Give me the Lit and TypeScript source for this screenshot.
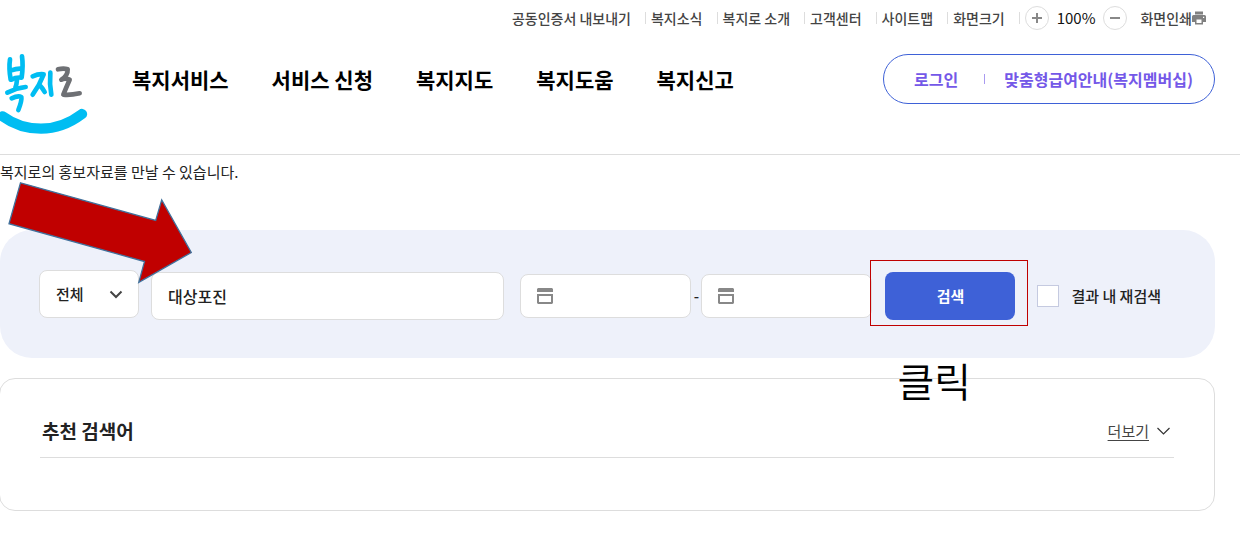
import { LitElement, html, css, svg } from "lit";
import { customElement, state } from "lit/decorators.js";

const UTIL_LINKS = ["공동인증서 내보내기", "복지소식", "복지로 소개", "고객센터", "사이트맵", "화면크기"];
const MENU = ["복지서비스", "서비스 신청", "복지지도", "복지도움", "복지신고"];

const logo = html`<svg class="logo" viewBox="0 30 264 261" role="img" aria-label="복지로">
  <g fill="none" stroke="#00bdf2" stroke-width="14" stroke-linecap="round" stroke-linejoin="round">
    <path d="M30 58 Q26 84 32 119 M66 49 Q70 76 65 112 M34 91 Q50 85 64 86 M34 119 Q48 111 64 113"/>
    <path d="M51 119 Q50 134 46 143 M22 158 Q50 144 77 141"/>
    <path d="M35 175 Q54 166 64 171 Q66 182 55 210"/>
    <path d="M98 109 Q116 101 131 103 Q118 137 98 164 M117 133 Q127 143 134 156"/>
    <path d="M151 98 Q148 130 154 164"/>
  </g>
  <path fill="none" stroke="#6e7074" stroke-width="14" stroke-linecap="round" stroke-linejoin="round"
    d="M174 88 Q191 84 203 88 Q204 106 184 119 Q194 113 209 119 Q199 141 190 164 Q211 166 239 160"/>
  <path fill="none" stroke="#00bdf2" stroke-width="31" stroke-linecap="round" d="M8 229 Q58 266 123 266 Q188 266 246 222"/>
</svg>`;

const calendar = html`<svg class="cal" viewBox="0 0 16 16" aria-hidden="true">
  <path fill="#888" d="M1 0h14l1 1v3H0V1zM0 6h16v9l-1 1H1l-1-1zM2 8v6h12V8z" fill-rule="evenodd"/>
</svg>`;

const sign = (plus: boolean) => html`<svg class="sign" viewBox="0 0 10 10" aria-hidden="true">
  <path fill="none" stroke="#888" stroke-width="2" d="M0 5H10"/>
  ${plus ? svg`<path fill="none" stroke="#888" stroke-width="2" d="M5 0V10"/>` : ""}
</svg>`;

@customElement("app-root")
export class AppRoot extends LitElement {
  @state() private zoom = 100;

  static styles = css`
    :host {
      display: block;
      background: #fff;
      color: #222;
      font: 15px/22px "Noto Sans CJK KR", "Noto Sans", sans-serif;
    }
    * { box-sizing: border-box; }
    a { color: inherit; text-decoration: none; }
    button, input, select { font: inherit; color: inherit; margin: 0; }
    ul { list-style: none; margin: 0; padding: 0; }

    .header { border-bottom: 1px solid #ddd; height: 155px; }
    .util {
      display: flex;
      justify-content: flex-end;
      align-items: center;
      height: 36px;
      padding-right: 34px;
      font-size: 14px;
      font-weight: 500;
      color: #444;
      white-space: nowrap;
    }
    .links { display: flex; }
    .links li { display: flex; align-items: center; }
    .links li::after { content: ""; width: 1px; height: 12px; margin: 0 5px 0 14px; background: #ddd; }
    .sizer { display: flex; align-items: center; gap: 8px; margin-right: 13px; }
    .round {
      display: grid;
      place-items: center;
      width: 24px;
      height: 24px;
      padding: 0;
      border: 1px solid #ddd;
      border-radius: 50%;
      background: #fff;
    }
    .sign { width: 10px; height: 10px; }
    .percent { font-size: 15px; font-weight: 400; color: #111; }
    .print { display: flex; align-items: center; padding: 0; border: 0; background: none; }
    .printer { width: 14px; height: 14px; }

    .main { display: flex; align-items: flex-start; padding: 14px 25px 0 0; }
    .logo { display: block; width: 88px; height: 87px; }
    .menu { display: flex; gap: 43px; margin: 13px 0 0 44px; font-size: 21px; line-height: 32px; font-weight: 700; color: #000; white-space: nowrap; }
    .member {
      display: flex;
      align-items: center;
      height: 50px;
      margin: 4px 0 0 auto;
      padding: 0 21px 0 30px;
      border: 1px solid #3e61d7;
      border-radius: 25px;
      font-size: 16px;
      font-weight: 700;
      color: #7458e8;
      white-space: nowrap;
    }
    .bar { width: 1px; height: 10px; margin: 0 19px 0 26px; background: #a99af0; }

    .desc { margin: 0; padding: 6px 0 0; height: 75px; }

    .content { padding-right: 25px; }
    .panel {
      position: relative;
      display: flex;
      align-items: flex-start;
      gap: 12px;
      padding: 40px 54px 38px 39px;
      border-radius: 32px;
      background: #eef1fa;
      font-weight: 500;
    }
    .pick { display: grid; width: 100px; align-items: center; }
    .pick select {
      grid-area: 1 / 1;
      appearance: none;
      height: 48px;
      padding: 0 16px;
      border: 1px solid #ddd;
      border-radius: 8px;
      background: #fff;
    }
    .caret { grid-area: 1 / 1; justify-self: end; width: 14px; height: 9px; margin-right: 16px; pointer-events: none; }
    .fields { display: flex; flex: 1; min-width: 0; align-items: center; margin-top: 2px; }
    .query {
      flex: 1;
      min-width: 80px;
      height: 48px;
      margin-right: 16px;
      padding: 0 16px;
      border: 1px solid #ddd;
      border-radius: 8px;
      background: #fff;
      font-size: 16px;
    }
    .date {
      display: flex;
      align-items: center;
      gap: 8px;
      width: 171px;
      height: 44px;
      padding: 0 16px;
      border: 1px solid #ddd;
      border-radius: 8px;
      background: #fff;
    }
    .date input { width: 100%; min-width: 0; border: 0; padding: 0; background: none; outline: 0; }
    .cal { flex: none; width: 16px; height: 16px; }
    .dash { width: 10px; text-align: center; }
    .go { position: relative; margin: 0 22px 0 13px; }
    .go button {
      display: block;
      width: 130px;
      height: 48px;
      border: 0;
      border-radius: 8px;
      background: #3e61d7;
      color: #fff;
      font-weight: 700;
    }
    .frame { position: absolute; inset: -12px -13px -6px -15px; border: 1px solid #c00000; pointer-events: none; }
    .note {
      position: absolute;
      top: 84px;
      left: 12px;
      z-index: 1;
      font-size: 40px;
      line-height: 48px;
      font-weight: 350;
      color: #000;
      white-space: nowrap;
    }
    .again { display: flex; align-items: center; gap: 12px; white-space: nowrap; }
    .again input { appearance: none; width: 22px; height: 22px; border: 1px solid #c5cae0; background: #fff; }
    .arrow { position: absolute; top: -50px; left: 6px; width: 188px; height: 106px; }

    .card {
      margin: 20px 0 0 -1px;
      padding: 36px 40px 52px;
      border: 1px solid #ddd;
      border-radius: 16px;
    }
    .head { display: flex; justify-content: space-between; align-items: center; height: 43px; padding: 0 4px 10px 2px; border-bottom: 1px solid #ddd; }
    .head h2 { margin: 0; font-size: 19px; line-height: 28px; font-weight: 700; }
    .more { display: flex; align-items: center; gap: 8px; color: #444; }
    .more span { text-decoration: underline; text-underline-offset: 3px; }
    .more svg { width: 13px; height: 8px; }
  `;

  render() {
    return html`
      <header class="header">
        <div class="util">
          <ul class="links">
            ${UTIL_LINKS.map((t) => html`<li><a href="#">${t}</a></li>`)}
          </ul>
          <div class="sizer">
            <button class="round" aria-label="확대" @click=${() => (this.zoom += 10)}>${sign(true)}</button>
            <span class="percent">${this.zoom}%</span>
            <button class="round" aria-label="축소" @click=${() => (this.zoom -= 10)}>${sign(false)}</button>
          </div>
          <button class="print">화면인쇄<svg class="printer" viewBox="0 0 14 14" aria-hidden="true">
            <path fill="#808080" fill-rule="evenodd" d="M3 .5h8V3.500H3zM1.500 4h11q1.500 0 1.500 1.500V11h-3v2.500H3V11H0V5.500Q0 4 1.500 4zM4.500 8.500V12h5V8.500zM11 5.800V7h1.200V5.800z"/>
          </svg></button>
        </div>
        <div class="main">
          <a href="#">${logo}</a>
          <nav><ul class="menu">${MENU.map((t) => html`<li><a href="#">${t}</a></li>`)}</ul></nav>
          <div class="member"><a href="#">로그인</a><span class="bar"></span><a href="#">맞춤형급여안내(복지멤버십)</a></div>
        </div>
      </header>
      <p class="desc">복지로의 홍보자료를 만날 수 있습니다.</p>
      <main class="content">
        <form class="panel" @submit=${(e: Event) => e.preventDefault()}>
          <div class="pick">
            <select aria-label="검색 구분"><option>전체</option></select>
            <svg class="caret" viewBox="0 0 14 9" aria-hidden="true"><path fill="none" stroke="#444" stroke-width="2" d="M1.500 1.500L7 7L12.500 1.500"/></svg>
          </div>
          <div class="fields">
            <input class="query" type="text" aria-label="검색어" .value=${"대상포진"} />
            <label class="date">${calendar}<input type="text" aria-label="시작일" /></label>
            <span class="dash">-</span>
            <label class="date">${calendar}<input type="text" aria-label="종료일" /></label>
            <div class="go">
              <button type="submit">검색</button>
              <span class="frame"></span>
              <span class="note">클릭</span>
            </div>
            <label class="again"><input type="checkbox" />결과 내 재검색</label>
          </div>
          <svg class="arrow" viewBox="6 180 188 106" aria-hidden="true">
            <path fill="#c00000" stroke="#41719c" stroke-width="1.300" d="M20.500 182.800L155.700 220.500L161.700 200L191.300 252.500L138.800 282.300L144.500 261.500L9 223.700Z"/>
          </svg>
        </form>
        <section class="card">
          <div class="head">
            <h2>추천 검색어</h2>
            <a class="more" href="#"><span>더보기</span><svg viewBox="0 0 13 8" aria-hidden="true"><path fill="none" stroke="#333" stroke-width="1.200" d="M.5 1L6.500 7L12.500 1"/></svg></a>
          </div>
        </section>
      </main>
    `;
  }
}
